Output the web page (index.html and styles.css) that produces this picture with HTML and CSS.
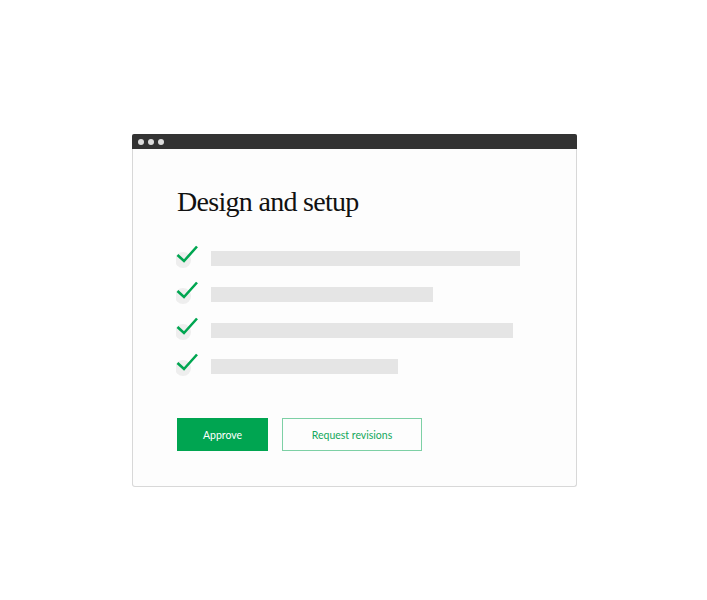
FILE: index.html
```html
<!DOCTYPE html>
<html lang="en">

<head>
    <meta charset="UTF-8">
    <meta name="viewport" content="width=device-width, initial-scale=1.0">
    <title>Design and setup</title>
    <link rel="stylesheet" href="styles.css">
</head>

<body>
    <!-- 浏览器窗口 -->
    <div class="window">
        <!-- 标题栏 -->
        <div class="titlebar">
            <span class="dot"></span>
            <span class="dot"></span>
            <span class="dot"></span>
        </div>
        <div class="content">
            <h1 class="title">Design and setup</h1>
            <!-- 清单 -->
            <ul class="checklist">
                <li>
                    <svg class="check" width="24" height="24" viewBox="0 0 24 24">
                        <circle cx="7" cy="16" r="8" fill="#eeeeee" />
                        <path d="M1.5 11 L8 17 L21 2.5" fill="none" stroke="#00a651" stroke-width="2.6" />
                    </svg>
                    <span class="bar" style="width: 309px"></span>
                </li>
                <li>
                    <svg class="check" width="24" height="24" viewBox="0 0 24 24">
                        <circle cx="7" cy="16" r="8" fill="#eeeeee" />
                        <path d="M1.5 11 L8 17 L21 2.5" fill="none" stroke="#00a651" stroke-width="2.6" />
                    </svg>
                    <span class="bar" style="width: 222px"></span>
                </li>
                <li>
                    <svg class="check" width="24" height="24" viewBox="0 0 24 24">
                        <circle cx="7" cy="16" r="8" fill="#eeeeee" />
                        <path d="M1.5 11 L8 17 L21 2.5" fill="none" stroke="#00a651" stroke-width="2.6" />
                    </svg>
                    <span class="bar" style="width: 302px"></span>
                </li>
                <li>
                    <svg class="check" width="24" height="24" viewBox="0 0 24 24">
                        <circle cx="7" cy="16" r="8" fill="#eeeeee" />
                        <path d="M1.5 11 L8 17 L21 2.5" fill="none" stroke="#00a651" stroke-width="2.6" />
                    </svg>
                    <span class="bar" style="width: 187px"></span>
                </li>
            </ul>
            <!-- 按钮 -->
            <div class="actions">
                <a href="javascript:;" class="btn btn-primary">Approve</a>
                <a href="javascript:;" class="btn btn-outline">Request revisions</a>
            </div>
        </div>
    </div>
</body>

</html>
```

FILE: styles.css
```css
* {
    padding: 0;
    margin: 0;
    box-sizing: border-box;
}

a {
    text-decoration: none;
}

ul,
li {
    list-style: none;
}

body {
    background-color: #fff;
    padding: 134px 0 0 2px;
    font-family: Lato, "Open Sans", sans-serif;
}

.window {
    width: 445px;
    margin: 0 auto;
    background-color: #fdfdfd;
    border: 1px solid #d8d8d8;
    border-top: none;
    border-radius: 3px;
}

.titlebar {
    display: flex;
    align-items: center;
    gap: 4px;
    height: 15px;
    margin: 0 -1px;
    padding-left: 6px;
    background-color: #333;
    border-radius: 2px 2px 0 0;
}

.dot {
    width: 6px;
    height: 6px;
    border-radius: 50%;
    background-color: #ddd;
}

.content {
    padding: 37px 0 35px 44px;
}

.title {
    font-family: "Liberation Serif", serif;
    font-weight: normal;
    font-size: 28px;
    line-height: 32px;
    color: #111;
    letter-spacing: -0.7px;
}

.checklist {
    margin-top: 26px;
}

.checklist li {
    display: flex;
    align-items: flex-start;
    height: 36px;
}

.check {
    flex: none;
    margin-left: -1px;
}

.bar {
    display: block;
    height: 15px;
    margin: 7px 0 0 11px;
    background-color: #e5e5e5;
}

.actions {
    display: flex;
    gap: 14px;
    margin-top: 30px;
}

.btn {
    display: flex;
    align-items: center;
    justify-content: center;
    height: 33px;
    font-size: 10.5px;
}

.btn-primary {
    width: 91px;
    background-color: #00a551;
    color: #fff;
}

.btn-outline {
    width: 140px;
    border: 1px solid #7dd0a5;
    color: #13a85c;
}
```
